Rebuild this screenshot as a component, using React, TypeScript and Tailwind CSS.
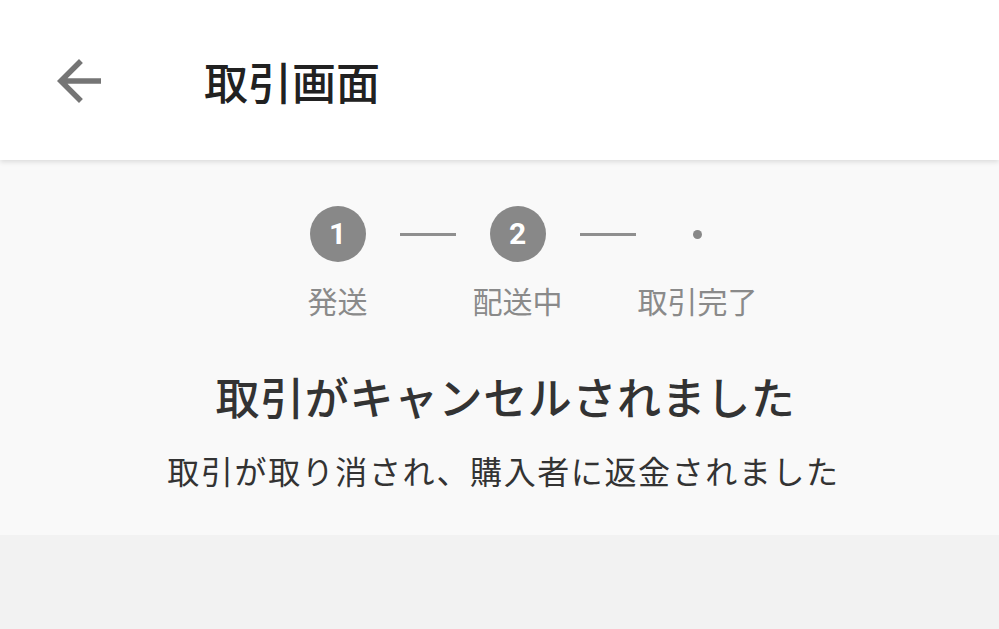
import React from "react";

const font = { fontFamily: '"Noto Sans CJK JP", "Noto Sans", sans-serif' };

function Circle({ n }: { n: number }) {
  return (
    <div className="w-[56px] h-[56px] rounded-full bg-[#888888] flex items-center justify-center text-white text-[30px] font-bold leading-none" style={{ fontFamily: 'Roboto, "Noto Sans", sans-serif' }}>
      {n}
    </div>
  );
}

function Line() {
  return <div className="w-[56px] h-[3px] bg-[#8f8f8f]" />;
}

export default function App() {
  return (
    <div className="w-[999px] h-[629px] bg-[#f2f2f2] overflow-hidden" style={font}>
      <header className="relative z-10 h-[160px] bg-white flex items-center shadow-[0_2px_5px_rgba(0,0,0,0.12)]">
        <div className="ml-[46px] mt-[2px] w-[66px] h-[66px]">
          <svg viewBox="0 0 24 24" width="66" height="66" fill="#757575">
            <path d="M20 11H7.83l5.59-5.59L12 4l-8 8 8 8 1.41-1.41L7.83 13H20v-2z" />
          </svg>
        </div>
        <h1 className="ml-[92px] mt-[2px] text-[44px] font-medium text-[#212121] leading-none">取引画面</h1>
      </header>
      <section className="bg-[#f9f9f9] pt-[46px] pb-[43px] flex flex-col items-center">
        <div className="pl-[36px] flex flex-col items-center">
          <div className="flex items-center gap-[34px]">
            <Circle n={1} />
            <Line />
            <Circle n={2} />
            <Line />
            <div className="w-[56px] h-[56px] flex items-center justify-center">
              <div className="w-[9px] h-[9px] rounded-full bg-[#888888]" />
            </div>
          </div>
          <div className="mt-[18px] grid grid-cols-[180px_180px_180px] text-[30px] leading-[40px] text-[#8a8a8a] text-center">
            <span>発送</span>
            <span>配送中</span>
            <span>取引完了</span>
          </div>
        </div>
        <h2 className="mt-[46px] pl-[12px] text-[44px] leading-[60px] font-medium text-[#333333] tracking-[0.6px]">取引がキャンセルされました</h2>
        <p className="mt-[22px] pl-[8px] text-[32px] leading-[44px] text-[#333333] tracking-[1.6px]">取引が取り消され、購入者に返金されました</p>
      </section>
    </div>
  );
}
